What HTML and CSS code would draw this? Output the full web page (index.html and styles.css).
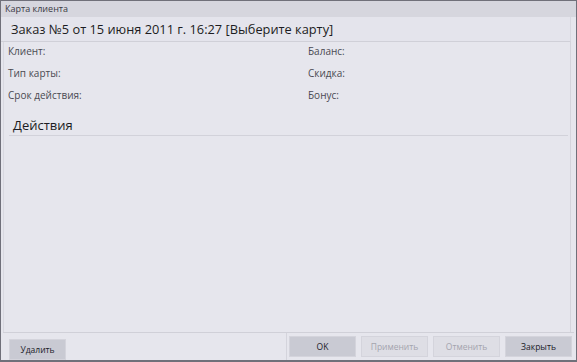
FILE: index.html
```html
<!DOCTYPE html>
<html lang="ru">
<head>
    <meta charset="UTF-8">
    <title>Карта клиента</title>
    <link rel="stylesheet" href="styles.css">
</head>
<body>
    <div class="window">
        <div class="titlebar">Карта клиента</div>
        <div class="header">Заказ №5 от 15 июня 2011 г. 16:27 [Выберите карту]</div>
        <div class="content">
            <div class="info">
                <div class="col">
                    <div class="field">Клиент:</div>
                    <div class="field">Тип карты:</div>
                    <div class="field">Срок действия:</div>
                </div>
                <div class="col">
                    <div class="field">Баланс:</div>
                    <div class="field">Скидка:</div>
                    <div class="field">Бонус:</div>
                </div>
            </div>
            <div class="section">Действия</div>
            <div class="actions"></div>
        </div>
        <div class="footer">
            <div class="footer-left">
                <button class="btn">Удалить</button>
            </div>
            <div class="footer-right">
                <button class="btn">OK</button>
                <button class="btn disabled">Применить</button>
                <button class="btn disabled">Отменить</button>
                <button class="btn">Закрыть</button>
            </div>
        </div>
    </div>
</body>
</html>
```

FILE: styles.css
```css
body {
    margin: 0;
    font-family: "Open Sans", "Noto Sans", sans-serif;
    background: #70707a;
}
.window {
    width: 577px;
    height: 362px;
    box-sizing: border-box;
    border: 1px solid #70707a;
    border-bottom-width: 2px;
    background: #e6e6ed;
    display: flex;
    flex-direction: column;
}
.titlebar {
    height: 16px;
    line-height: 15px;
    padding-left: 4px;
    font-size: 9px;
    color: #3a3a44;
    background: #d6d6de;
}
.header {
    height: 24px;
    line-height: 25px;
    padding-left: 10px;
    margin-right: 5px;
    font-size: 12.8px;
    color: #1c1c22;
    background: #e4e4ec;
    border-bottom: 1px solid #d0d0d8;
    border-right: 1px solid #d8d8e0;
}
.content {
    flex: 1;
    margin: 0 5px 0 2px;
    border-right: 1px solid #d4d4dc;
    border-left: 1px solid #d8d8e0;
    display: flex;
    flex-direction: column;
}
.info {
    display: flex;
    padding: 1px 0 0 4px;
}
.col {
    width: 300px;
}
.col + .col {
    width: auto;
}
.field {
    height: 22px;
    line-height: 16px;
    font-size: 10px;
    color: #4a4a52;
}
.section {
    margin: 6px 2px 0 5px;
    padding: 2px 0 0 4px;
    height: 18px;
    line-height: 17px;
    font-size: 13px;
    color: #1c1c22;
    border-bottom: 1px solid #d2d2da;
}
.actions {
    flex: 1;
}
.footer {
    height: 27px;
    display: flex;
    border-top: 1px solid #d0d0d8;
    margin: 0 2px 0 2px;
}
.footer-left {
    width: 284px;
    padding: 3px 0 0 6px;
    box-sizing: border-box;
    border-right: 1px solid #d4d4dc;
}
.footer-right {
    flex: 1;
    display: flex;
    gap: 5px;
    padding: 3px 0 0 2px;
}
.btn {
    width: 67px;
    height: 21px;
    padding: 0;
    border: 1px solid #d4d4dc;
    background: #c9cad3;
    font-family: inherit;
    font-size: 8.5px;
    color: #202028;
}
.footer-left .btn {
    width: 57px;
}
.btn.disabled {
    background: #dedee5;
    color: #a4a4ae;
}
```
